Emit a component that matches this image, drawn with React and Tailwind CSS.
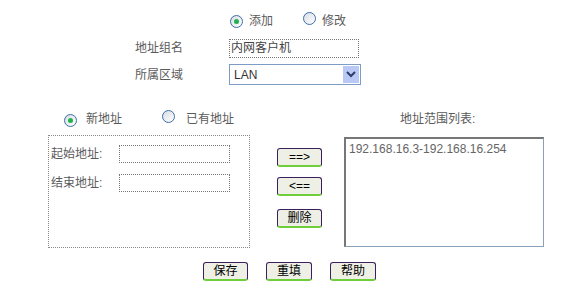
import React from "react";

const font = { fontFamily: '"Liberation Sans", "Noto Sans CJK SC", sans-serif' };

const Radio = ({ checked }) => (
  <span className="inline-flex items-center justify-center w-[13px] h-[13px] rounded-full border border-[#3d6ea8] bg-gradient-to-br from-[#d8dde4] to-[#ffffff]">
    {checked && <span className="w-[5px] h-[5px] rounded-full bg-[#22b14c]" />}
  </span>
);

const Btn = ({ children, w = "w-[45px]" }) => (
  <button className={`${w} h-[19px] flex items-center justify-center text-[12px] leading-none text-black bg-[#eef0e6] border border-[#3b1f5c] border-b-2 border-b-[#6fcf3a] rounded-[3px]`}>
    {children}
  </button>
);

export default function App() {
  return (
    <div className="w-[571px] h-[288px] bg-white text-[#5a5a5a] text-[12px]" style={font}>
      {/* mode radios */}
      <div className="flex items-center pt-[14px] pl-[230px] h-[28px]">
        <Radio checked />
        <span className="ml-[6px]">添加</span>
        <span className="ml-[30px]"><Radio /></span>
        <span className="ml-[6px]">修改</span>
      </div>

      <div className="flex items-center mt-[10px] h-[20px]">
        <span className="pl-[135px] w-[229px]">地址组名</span>
        <div className="w-[130px] h-[19px] border border-dotted border-[#777] flex items-center px-[1px] text-[#444]">内网客户机</div>
      </div>

      <div className="flex items-center mt-[6px] h-[21px]">
        <span className="pl-[135px] w-[229px]">所属区域</span>
        <div className="w-[132px] h-[21px] border border-[#7c9cc6] flex items-center justify-between pl-[4px] pr-[1px] text-[#333]">
          <span>LAN</span>
          <span className="w-[16px] h-[17px] bg-[#b9c8f5] flex items-center justify-center">
            <svg width="10" height="7" viewBox="0 0 10 7"><path d="M1 1 L5 5 L9 1" stroke="#2c3e66" strokeWidth="2" fill="none" /></svg>
          </span>
        </div>
      </div>

      <div className="flex items-center mt-[24px] h-[20px]">
        <span className="ml-[64px]"><Radio checked /></span>
        <span className="ml-[9px]">新地址</span>
        <span className="ml-[40px]"><Radio /></span>
        <span className="ml-[11px]">已有地址</span>
        <span className="ml-[166px]">地址范围列表:</span>
      </div>

      <div className="flex mt-[6px] h-[113px]">
        <div className="ml-[48px] w-[202px] h-[113px] border border-dotted border-[#888] pt-[8px] pl-[2px]">
          <div className="flex items-center h-[19px]">
            <span className="w-[68px]">起始地址:</span>
            <div className="w-[111px] h-[18px] border border-dotted border-[#777]" />
          </div>
          <div className="flex items-center h-[19px] mt-[10px]">
            <span className="w-[68px]">结束地址:</span>
            <div className="w-[111px] h-[18px] border border-dotted border-[#777]" />
          </div>
        </div>
        <div className="ml-[27px] pt-[13px] flex flex-col gap-[10px]">
          <Btn w="w-[45px]">==&gt;</Btn>
          <Btn w="w-[45px]">&lt;==</Btn>
          <div className="mt-[3px]"><Btn w="w-[45px]">删除</Btn></div>
        </div>
        <div className="ml-[22px] mt-[2px] w-[200px] h-[110px] border border-dotted border-[#8aa0b8] border-t-2 border-t-[#777] border-l-2 border-l-[#777] border-solid px-[3px] pt-[1px] text-[#666]">
          192.168.16.3-192.168.16.254
        </div>
      </div>

      <div className="flex items-center mt-[14px] pl-[203px] gap-[18px]">
        <Btn w="w-[45px]">保存</Btn>
        <Btn w="w-[46px]">重填</Btn>
        <Btn w="w-[46px]">帮助</Btn>
      </div>
    </div>
  );
}
